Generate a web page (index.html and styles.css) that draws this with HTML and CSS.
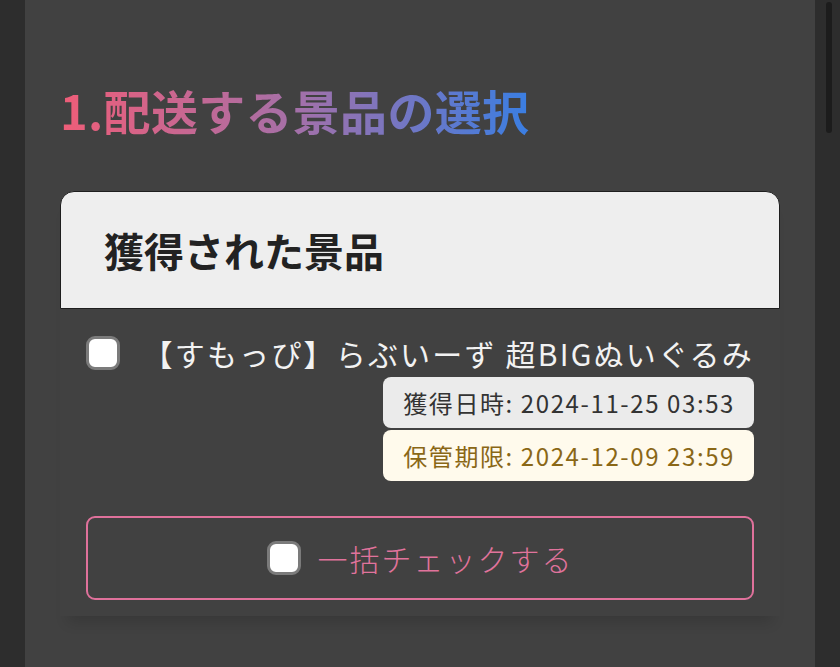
FILE: index.html
```html
<!DOCTYPE html>
<html lang="ja">
<head>
  <meta charset="UTF-8" />
  <meta name="viewport" content="width=device-width, initial-scale=1" />
  <title>配送する景品の選択</title>
  <link rel="stylesheet" href="styles.css">
</head>
<body>
  <div id="panel">
    <h2 class="step-title">1.配送する景品の選択</h2>

    <div class="prize-card">
      <div class="card-head">獲得された景品</div>
      <div class="card-body">
        <label class="prize-row">
          <input type="checkbox" class="check" />
          <span class="prize-name">【すもっぴ】らぶいーず 超BIGぬいぐるみ</span>
        </label>
        <div class="prize-meta">
          <div class="tag tag-date">獲得日時: 2024-11-25 03:53</div>
          <div class="tag tag-limit">保管期限: 2024-12-09 23:59</div>
        </div>
        <label class="check-all">
          <input type="checkbox" class="check" />
          <span>一括チェックする</span>
        </label>
      </div>
    </div>
  </div>
  <div class="scroll-thumb"></div>
</body>
</html>
```
FILE: styles.css
```css
body {
  margin: 0; padding: 0;
  font-family: "Noto Sans CJK JP", "Noto Sans", sans-serif;
  background: #2d2d2d;
  color: #eee;
  min-height: 100vh;
}
#panel {
  margin: 0 25px;
  min-height: 100vh;
  background: #414141;
  padding: 81px 35px 0;
  box-sizing: border-box;
}
.step-title {
  margin: 0;
  display: inline-block;
  font-size: 47px;
  line-height: 58px;
  font-weight: 700;
  letter-spacing: 0.3px;
  background: linear-gradient(90deg, #ef5d78, #a570a8 50%, #3a7ee2);
  -webkit-background-clip: text;
  background-clip: text;
  color: transparent;
}
.prize-card {
  margin-top: 52px;
  border-radius: 14px 14px 0 0;
  box-shadow: 0 14px 14px -8px rgba(0,0,0,0.14);
}
.card-head {
  height: 118px;
  box-sizing: border-box;
  display: flex;
  align-items: center;
  padding: 0 43px;
  background: #eeeeee;
  border: 1px solid #1e1e1e;
  border-radius: 14px 14px 0 0;
  color: #222;
  font-size: 40px;
  font-weight: 700;
}
.card-body {
  padding: 26px 26px 16px;
}
.prize-row {
  display: flex;
  justify-content: space-between;
  align-items: center;
  font-size: 30px;
  line-height: 36px;
  letter-spacing: 2.2px;
  color: #f2f2f2;
}
.check {
  appearance: none;
  -webkit-appearance: none;
  margin: 0;
  width: 34px;
  height: 34px;
  flex: none;
  background: #fff;
  border: 3px solid #7b7b7b;
  border-radius: 9px;
  box-sizing: border-box;
}
.prize-meta {
  margin-top: 6px;
  display: flex;
  flex-direction: column;
  align-items: flex-end;
  gap: 2px;
}
.tag {
  padding: 9px 19px 9px 20px;
  font-size: 24px;
  line-height: 33px;
  letter-spacing: 1.6px;
  border-radius: 8px;
}
.tag-date {
  background: #ebebeb;
  color: #333;
}
.tag-limit {
  background: #fffaec;
  color: #8a6716;
}
.check-all {
  margin-top: 35px;
  height: 84px;
  box-sizing: border-box;
  display: flex;
  justify-content: center;
  align-items: center;
  gap: 17px;
  border: 2px solid #df719b;
  border-radius: 9px;
  color: #e0739c;
  font-size: 30px;
  font-weight: 300;
  letter-spacing: 2px;
}
.scroll-thumb {
  position: fixed;
  top: 2px;
  right: 8px;
  width: 6px;
  height: 131px;
  border-radius: 3px;
  background: #1c1c1c;
}
```
